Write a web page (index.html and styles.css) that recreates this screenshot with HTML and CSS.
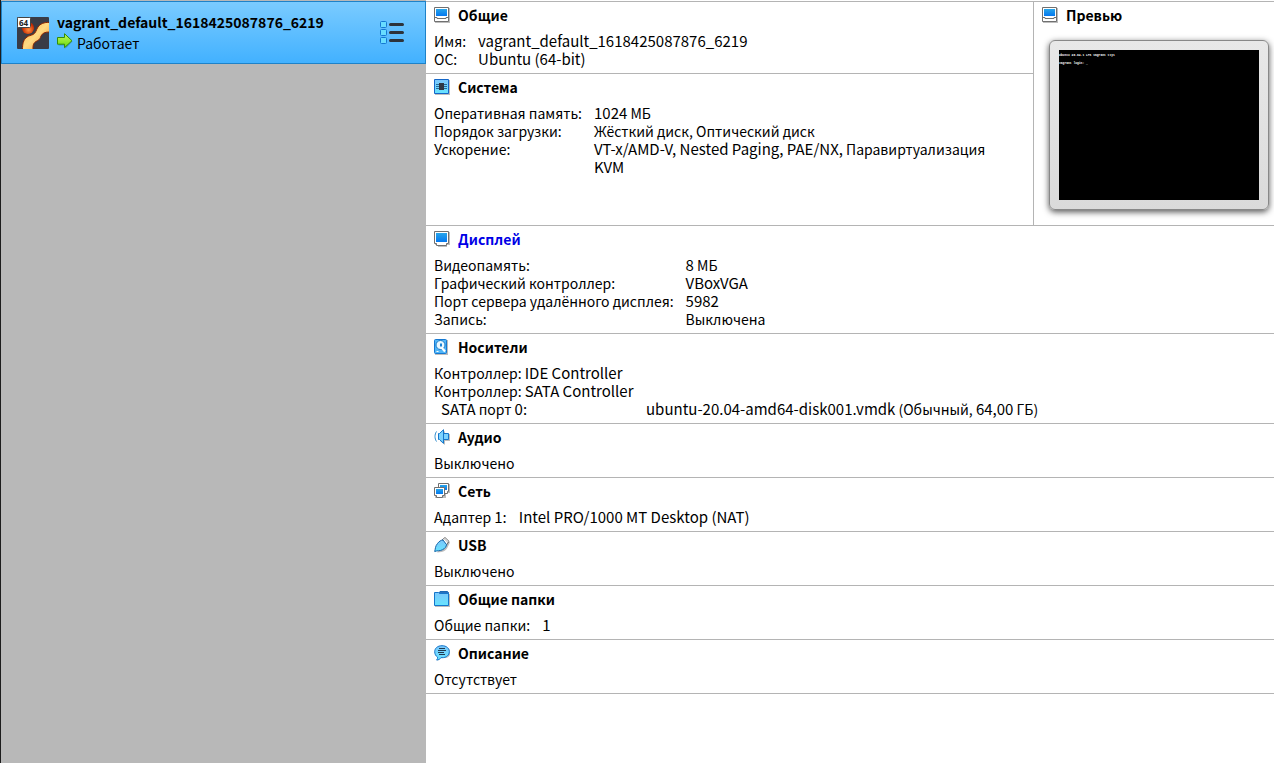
FILE: index.html
```html
<!DOCTYPE html>
<html lang="ru">
<head>
<meta charset="utf-8">
<title>VirtualBox</title>
<link rel="stylesheet" href="styles.css">
</head>
<body>
<svg class="defs" aria-hidden="true">
  <defs>
    <linearGradient id="screen" x1="0" y1="0" x2="0" y2="1"><stop offset="0" stop-color="#27a5ea"/><stop offset="1" stop-color="#0478f0"/></linearGradient>
    <linearGradient id="sky" x1="0" y1="0" x2="0" y2="1"><stop offset="0" stop-color="#7cc6fb"/><stop offset="1" stop-color="#66e4ff"/></linearGradient>
    <linearGradient id="flame" x1="0" y1="0" x2="1" y2="1"><stop offset="0" stop-color="#ffb04a"/><stop offset=".5" stop-color="#ffdb83"/><stop offset="1" stop-color="#f58a28"/></linearGradient>
    <radialGradient id="ball" cx=".55" cy=".65"><stop offset="0" stop-color="#ff9340"/><stop offset="1" stop-color="#c82a00"/></radialGradient>
    <linearGradient id="leaf" x1="0" y1="0" x2="0" y2="1"><stop offset="0" stop-color="#c4fa5c"/><stop offset="1" stop-color="#66d90c"/></linearGradient>
  </defs>
  <symbol id="monitor" viewBox="0 0 16 16">
    <path d="M1 1h15v15H1z" fill="#bdbdbd"/><path d="M.5.5h14v14H.5z" fill="#fff" stroke="#707070"/>
    <path d="M2 2h11v7H2z" fill="url(#screen)"/><path d="M1 10.5h2v1h9v-1h2" fill="none" stroke="#707070"/>
  </symbol>
</svg>
<div class="app">
  <nav class="sidebar" aria-label="Машины">
    <div class="machine">
      <svg class="os" viewBox="0 0 32 32">
        <rect width="32" height="32" rx="1" fill="#393c46"/>
        <circle cx="11" cy="11" r="6" fill="url(#ball)"/>
        <path d="M32.500 5.500C27 5 23 7 21 10c-2 3-2 6-5 7.500-2 1-4 1-6 2.500-4 3-4.500 7-4.500 12.500H16c0-4 0-6 3-8 4-2 4-3 5-5.500 1.500-3 4-4 8.500-4z" fill="url(#flame)" stroke="#8b2500" stroke-width="1"/>
        <rect x=".5" y=".5" width="13" height="10" rx="1" fill="#fff" stroke="#444"/>
        <text class="bits" x="2" y="9">64</text>
      </svg>
      <div class="info">
        <div class="name">vagrant_default_1618425087876_6219</div>
        <div class="state">
          <svg class="icon" viewBox="0 0 16 16"><path d="M1.500 6.500h6V2l8 6.500L8.500 15.500v-3h-7z" fill="#2b7baa" opacity=".6"/><path d="M.5 4.500h7V.7l7.500 7-7.500 7v-3.500H.5z" fill="url(#leaf)" stroke="#348b0b"/></svg>
          <span>Работает</span>
        </div>
      </div>
      <button class="tools" type="button" aria-label="Инструменты">
        <svg viewBox="0 0 24 24">
          <g fill="#68dcff" stroke="#1478d2"><rect x=".5" y=".5" width="6" height="6" rx="1"/><rect x=".5" y="8.500" width="6" height="6" rx="1"/><rect x=".5" y="16.500" width="6" height="6" rx="1"/></g>
          <path d="M10.500 3.500h12M10.500 11.500h12M10.500 19.500h12" stroke="#2d333b" stroke-width="3" stroke-linecap="round"/>
        </svg>
      </button>
    </div>
  </nav>
  <main class="details">
    <div class="top">
      <div class="stack">
        <section class="block">
          <h2><svg class="icon"><use href="#monitor"/></svg>Общие</h2>
          <dl><dt>Имя:</dt><dd><span class="latin">vagrant_default_1618425087876_6219</span></dd><dt>ОС:</dt><dd><span class="latin">Ubuntu (64-bit)</span></dd></dl>
        </section>
        <section class="block grow">
          <h2><svg class="icon" viewBox="0 0 16 16"><path d="M1 1h15v15H1z" fill="#bdbdbd"/><path d="M.5.5h14v14H.5z" fill="url(#sky)" stroke="#1466c8"/><path d="M2 5.500h11M2 7.500h11M2 9.500h11" stroke="#24699b"/><path d="M5 4h5v7H5z" fill="#303844"/></svg>Система</h2>
          <dl><dt>Оперативная память:</dt><dd><span class="latin">1024</span> МБ</dd><dt>Порядок загрузки:</dt><dd>Жёсткий диск, Оптический диск</dd><dt>Ускорение:</dt><dd><span class="latin">VT-x/AMD-V, Nested Paging, PAE/NX,</span> Паравиртуализация <span class="latin">KVM</span></dd></dl>
        </section>
      </div>
      <section class="preview">
        <h2><svg class="icon"><use href="#monitor"/></svg>Превью</h2>
        <div class="bezel"><div class="screen"><p>Ubuntu 20.04.1 LTS vagrant tty1</p><p>vagrant login: _</p></div></div>
      </section>
    </div>
    <section class="block">
      <h2><svg class="icon" viewBox="0 0 16 16"><path d="M1 1h15v13h-3v2H4v-2H1z" fill="#bdbdbd"/><path d="M.5.5h14v12h-2v2h-10v-2h-2z" fill="#fff" stroke="#707070"/><path d="M2 2h11v9H2z" fill="url(#screen)"/></svg><a class="link" href="#display">Дисплей</a></h2>
      <dl><dt>Видеопамять:</dt><dd><span class="latin">8</span> МБ</dd><dt>Графический контроллер:</dt><dd><span class="latin">VBoxVGA</span></dd><dt>Порт сервера удалённого дисплея:</dt><dd><span class="latin">5982</span></dd><dt>Запись:</dt><dd>Выключена</dd></dl>
    </section>
    <section class="block">
      <h2><svg class="icon" viewBox="0 0 16 16"><rect x="1" y="1" width="13" height="15" fill="#bdbdbd"/><rect x=".5" y=".5" width="12" height="14" rx="1" fill="#50b5f7" stroke="#1478d2"/><circle cx="6.500" cy="6" r="4.500" fill="#e9f8ff" stroke="#1678c7"/><path d="M6 4.500h2v3H6z" fill="#1b83d5"/><path d="M7.500 8.500l3.500 4" stroke="#fff" stroke-width="2"/><path d="M2.500 12.500h2" stroke="#fff"/></svg>Носители</h2>
      <p>Контроллер: <span class="latin">IDE Controller</span></p>
      <p>Контроллер: <span class="latin">SATA Controller</span></p>
      <dl class="ports"><dt><span class="latin">SATA</span> порт <span class="latin">0:</span></dt><dd><span class="latin">ubuntu-20.04-amd64-disk001.vmdk</span> (Обычный, <span class="latin">64,00</span> ГБ)</dd></dl>
    </section>
    <section class="block">
      <h2><svg class="icon" viewBox="0 0 16 16"><path d="M6 6l5-4v14l-5-4zM11 5h5v7h-5z" fill="#bdbdbd"/><path d="M4.500 4.500h1L9.500.7v13.600L5.500 10.500h-1zM9.500 4.500h5v6h-5z" fill="#7cd3ff" stroke="#1476cb"/><path d="M2.500 2.500c-2 3-2 7 0 10" fill="none" stroke="#2b89cd"/></svg>Аудио</h2>
      <p>Выключено</p>
    </section>
    <section class="block">
      <h2><svg class="icon" viewBox="0 0 16 16"><path d="M6 1h10v9h-4v5H1V6h5z" fill="#bdbdbd"/><path d="M4.500.5h10v8h-1v2h-7v-2h-2z" fill="#fff" stroke="#707070"/><path d="M6 2h7v5H6z" fill="url(#screen)"/><path d="M.5 4.500h10v8h-2v2h-6v-2h-2z" fill="#fff" stroke="#707070"/><path d="M2 6h7v5H2z" fill="url(#screen)"/></svg>Сеть</h2>
      <dl><dt>Адаптер <span class="latin">1:</span></dt><dd><span class="latin">Intel PRO/1000 MT Desktop (NAT)</span></dd></dl>
    </section>
    <section class="block">
      <h2><svg class="icon" viewBox="0 0 16 16"><path d="M3 15.500c7 0 10-3 11-6l2-4-3-2z" fill="#bdbdbd"/><path d="M8 3l3-2.500 4 3.800L12.500 8z" fill="#fff" stroke="#707070"/><path d="M11 2.500l1 1M13 4.500l1 1" stroke="#555"/><path d="M.7 14.500C1.500 12 1 9.500 3.500 6.500 5 4.500 7 3 9 3l3.500 4.500c0 2-1.500 4-4 5.200-3 1.600-5 .6-7.800 1.800z" fill="url(#sky)" stroke="#1464a8"/></svg>USB</h2>
      <p>Выключено</p>
    </section>
    <section class="block">
      <h2><svg class="icon" viewBox="0 0 16 16"><path d="M1 3h15v13H1z" fill="#bdbdbd"/><path d="M4.500 2.500L6 .5h7.500l1 1v3h-10z" fill="#2870bd" stroke="#1b68b4"/><path d="M.5 1.500h4l1 1h9v12H.5z" fill="url(#sky)" stroke="#1476cb"/></svg>Общие папки</h2>
      <dl><dt>Общие папки:</dt><dd><span class="latin">1</span></dd></dl>
    </section>
    <section class="block">
      <h2><svg class="icon" viewBox="0 0 16 16"><path d="M3 16c2-1 2-2 2-3h7c6-2 5-8 2-10z" fill="#bdbdbd"/><path d="M8 .7c4.500 0 7.300 2.600 7.300 6s-2.800 6-7.300 6L7 12.600c-1 1.700-2.500 2.400-4.500 2.400 1-.8 1.200-1.800 1-3C1.700 11 .7 9 .7 6.700c0-3.400 2.800-6 7.300-6z" fill="url(#sky)" stroke="#1476cb"/><path d="M5 3.500h6M4 5.500h8M4 7.500h6M5 9.500h6" stroke="#203a50"/></svg>Описание</h2>
      <p>Отсутствует</p>
    </section>
  </main>
</div>
</body>
</html>
```
FILE: styles.css
```css
* { box-sizing: border-box; }
body { margin: 0; font: 14px/18px "Noto Sans CJK SC", "Noto Sans", sans-serif; color: #000; background: #fff; }
h2, p, dl, dd { margin: 0; }
.defs { position: absolute; width: 0; height: 0; }
.app { display: flex; min-height: 100vh; }
.sidebar { flex: 0 0 426px; padding-top: 1px; background: #b8b8b8; border-left: 1px solid #1c1c1c; }
.machine { display: flex; align-items: center; gap: 8px; padding: 10px 21px 9px 15px; border: 1px solid #1e82c8; background: linear-gradient(#7acbff, #42b1ff); }
.os { width: 32px; height: 32px; flex: none; }
.bits { font: bold 8px "Noto Sans", sans-serif; fill: #222; }
.info { flex: 1; line-height: 21px; }
.name { font-weight: 700; }
.state { display: flex; gap: 4px; }
.icon { width: 16px; height: 16px; flex: none; }
.tools { width: 24px; height: 24px; padding: 0; border: 0; background: none; }
.tools svg { display: block; width: 24px; height: 24px; }
.details { flex: 1; min-width: 0; margin-top: 1px; border-top: 1px solid #b4b4b4; }
.top { display: flex; border-bottom: 1px solid #b4b4b4; }
.stack { flex: 1; display: flex; flex-direction: column; border-right: 1px solid #b4b4b4; }
.block { padding: 4px 8px 5px; border-bottom: 1px solid #b4b4b4; }
.grow { flex: 1; border-bottom: 0; padding-right: 32px; }
h2 { display: flex; align-items: center; gap: 8px; margin-bottom: 8px; font-size: 14px; line-height: 18px; }
.link { color: #0000e6; text-decoration: none; }
.latin { font-size: 15px; line-height: 15px; }
dl { display: grid; grid-template-columns: auto 1fr; column-gap: 12px; }
.ports { grid-template-columns: 193px 1fr; padding-left: 7px; }
.preview { padding: 4px 5px 15px 8px; }
.bezel { margin: 16px 0 0 7px; padding: 9px; border: 1px solid #888; border-radius: 6px; background: linear-gradient(#e8e8e8, #dadada); box-shadow: 0 2px 6px #555; }
.screen { width: 200px; height: 150px; padding-top: 2px; background: #000; color: #fff; font: bold 3px/8px "Liberation Mono", monospace; }
```
